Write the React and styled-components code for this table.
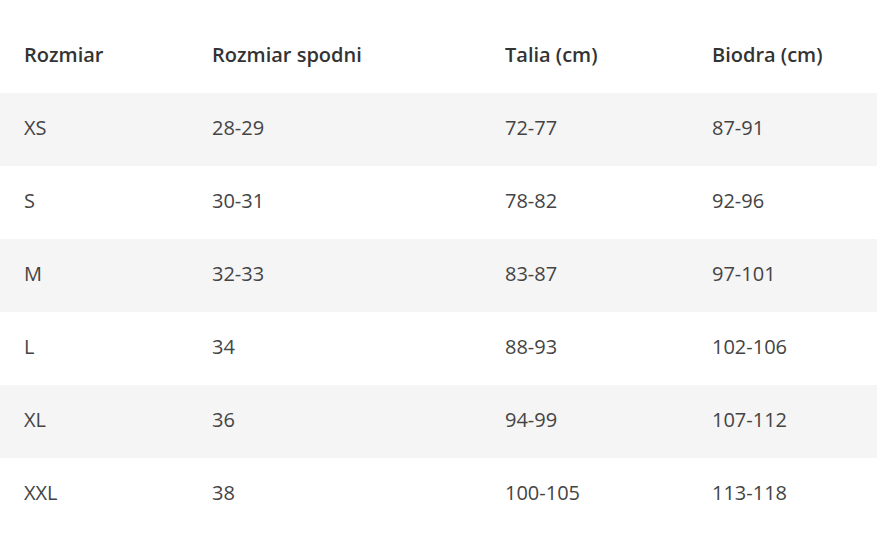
import React from 'react'
import styled, { createGlobalStyle } from 'styled-components'

const GlobalStyle = createGlobalStyle`
  html, body {
    margin: 0;
    padding: 0;
    background: #ffffff;
  }
  body {
    font-family: "Open Sans", "Noto Sans", "Liberation Sans", sans-serif;
  }
`

const rows = [
  ['XS', '28-29', '72-77', '87-91'],
  ['S', '30-31', '78-82', '92-96'],
  ['M', '32-33', '83-87', '97-101'],
  ['L', '34', '88-93', '102-106'],
  ['XL', '36', '94-99', '107-112'],
  ['XXL', '38', '100-105', '113-118'],
]

const Wrapper = styled.div`
  padding-top: 20px;
  width: 877px;
`

const Table = styled.table`
  width: 100%;
  border-collapse: collapse;
  table-layout: fixed;
`

const HeadCell = styled.th`
  height: 73px;
  box-sizing: border-box;
  padding: 0 0 4px 24px;
  text-align: left;
  font-size: 20px;
  font-weight: 600;
  color: #333333;
  vertical-align: middle;
`

const Row = styled.tr`
  background: ${p => (p.$striped ? '#f5f5f5' : '#ffffff')};
`

const Cell = styled.td`
  height: 73px;
  box-sizing: border-box;
  padding: 0 0 4px 24px;
  font-size: 20px;
  color: #444444;
  vertical-align: middle;
`

export default function App() {
  return (
    <Wrapper>
      <GlobalStyle />
      <Table>
        <colgroup>
          <col style={{ width: 188 }} />
          <col style={{ width: 293 }} />
          <col style={{ width: 207 }} />
          <col />
        </colgroup>
        <thead>
          <tr>
            <HeadCell>Rozmiar</HeadCell>
            <HeadCell>Rozmiar spodni</HeadCell>
            <HeadCell>Talia (cm)</HeadCell>
            <HeadCell>Biodra (cm)</HeadCell>
          </tr>
        </thead>
        <tbody>
          {rows.map((r, i) => (
            <Row key={r[0]} $striped={i % 2 === 0}>
              {r.map((v, j) => (
                <Cell key={j}>{v}</Cell>
              ))}
            </Row>
          ))}
        </tbody>
      </Table>
    </Wrapper>
  )
}
